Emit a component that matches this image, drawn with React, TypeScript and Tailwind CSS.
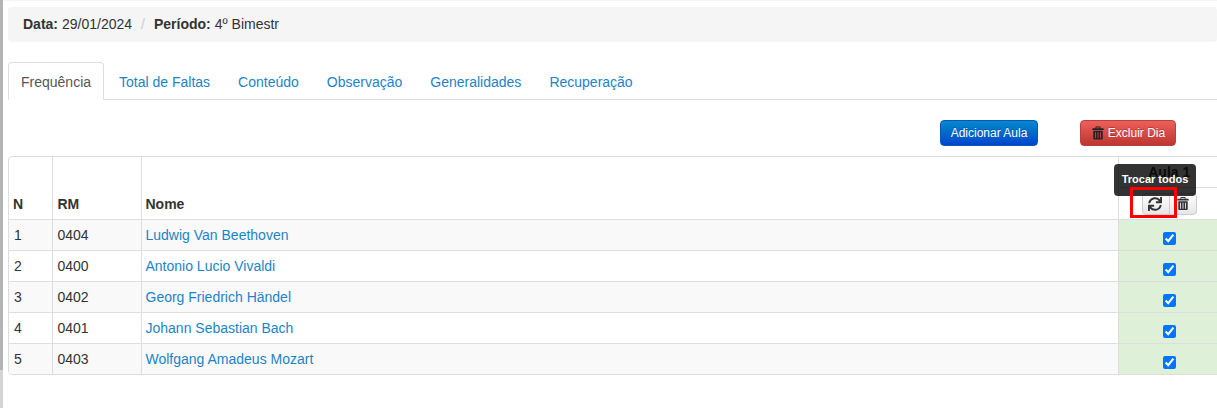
import React from "react";
import { FaSync } from "react-icons/fa";

const font = { fontFamily: '"Liberation Sans", Arial, sans-serif' };

function Trash({ className }: { className?: string }) {
  return (
    <svg viewBox="0 0 14 15" className={className} fill="currentColor">
      <path d="M5 0h4a1 1 0 0 1 1 1v1h3a.6.6 0 0 1 .6.6V4H.4V2.6A.6.6 0 0 1 1 2h3V1a1 1 0 0 1 1-1zm0 1v1h4V1H5z" fillRule="evenodd" />
      <path d="M1.5 5h11v9a1 1 0 0 1-1 1h-9a1 1 0 0 1-1-1V5zm2 1.5v7h1v-7h-1zm3 0v7h1v-7h-1zm3 0v7h1v-7h-1z" fillRule="evenodd" />
    </svg>
  );
}

const tabs = ["Total de Faltas", "Conteúdo", "Observação", "Generalidades", "Recuperação"];
const rows = [
  ["1", "0404", "Ludwig Van Beethoven"],
  ["2", "0400", "Antonio Lucio Vivaldi"],
  ["3", "0402", "Georg Friedrich Händel"],
  ["4", "0401", "Johann Sebastian Bach"],
  ["5", "0403", "Wolfgang Amadeus Mozart"],
];

export default function App() {
  return (
    <div className="flex w-[1217px] h-[408px] overflow-hidden bg-white text-[14px] text-[#333] leading-[20px]" style={font}>
      <div className="flex flex-col w-[3px] shrink-0">
        <div className="h-[370px] bg-[#b4b4b4]" />
        <div className="flex-1 bg-[#d4d4d4]" />
      </div>
      <div className="flex-1 min-w-0 pl-[5px]">
        <div className="h-px -ml-[5px] bg-[#f5f5f5]" />
        <div className="mt-[6px] h-[35px] rounded-[4px] bg-[#f5f5f5] pl-[15px] flex items-center pb-px">
          <b>Data:</b>
          <span className="ml-[4px]">29/01/2024</span>
          <span className="ml-[9px] mr-[9px] text-[#ccc]">/</span>
          <b>Período:</b>
          <span className="ml-[4px]">4º Bimestr</span>
        </div>

        <div className="mt-[20px] flex h-[38px] border-b border-[#ddd]">
          <div className="h-[38px] border border-[#ddd] border-b-white rounded-t-[4px] bg-white px-[12px] pt-[9px] mr-[2px] text-[#555]">
            Frequência
          </div>
          {tabs.map((t) => (
            <div key={t} className="px-[13px] pt-[10px] mr-[2px] text-[#1c84c6]">
              {t}
            </div>
          ))}
        </div>

        <div className="mt-[20px] flex justify-end pr-[41px]">
          <button className="h-[26px] w-[98px] rounded-[4px] border border-[#0b56b8] bg-gradient-to-b from-[#0088cc] to-[#0044cc] text-white text-[12px] leading-none [text-shadow:0_-1px_0_rgba(0,0,0,0.25)]">
            Adicionar Aula
          </button>
          <button className="ml-[42px] h-[26px] w-[96px] rounded-[4px] border border-[#b8423d] bg-gradient-to-b from-[#ee5f5b] to-[#bd362f] text-white text-[12px] leading-none flex items-center justify-center gap-[4px] pl-px [text-shadow:0_-1px_0_rgba(0,0,0,0.25)]">
            <Trash className="w-[12px] h-[14px] text-[#222]" />
            Excluir Dia
          </button>
        </div>

        <div className="relative mt-[10px] w-[1300px] border border-[#ddd] rounded-[4px] overflow-hidden">
          <table className="table-fixed border-collapse w-[1211px]">
            <colgroup>
              <col className="w-[43px]" />
              <col className="w-[89px]" />
              <col className="w-[977px]" />
              <col className="w-[102px]" />
            </colgroup>
            <thead>
              <tr className="h-[30px]">
                <th rowSpan={2} className="align-bottom text-left font-bold pl-[4px] pr-[5px] pb-[5px] border-r border-[#ddd]">N</th>
                <th rowSpan={2} className="align-bottom text-left font-bold px-[5px] pb-[5px] border-r border-[#ddd]">RM</th>
                <th rowSpan={2} className="align-bottom text-left font-bold pl-[4px] pr-[5px] pb-[5px] border-r border-[#ddd]">Nome</th>
                <th className="text-center font-bold border-b border-[#ddd]">Aula 1</th>
              </tr>
              <tr className="h-[32px]">
                <th className="p-0 align-middle">
                  <div className="flex justify-center pt-[1px]">
                    <button className="flex items-center justify-center w-[28px] h-[22px] pr-px rounded-l-[4px] border border-[#ccc] bg-gradient-to-b from-white to-[#e6e6e6] text-[#333]">
                      <FaSync className="w-[14px] h-[14px]" />
                    </button>
                    <button className="flex items-center justify-center w-[28px] h-[22px] -ml-px rounded-r-[4px] border border-[#ccc] bg-gradient-to-b from-white to-[#e6e6e6] text-[#333]">
                      <Trash className="w-[12px] h-[13px]" />
                    </button>
                  </div>
                </th>
              </tr>
            </thead>
            <tbody>
              {rows.map((r, i) => (
                <tr key={r[0]} className={`h-[31px] border-t border-[#ddd] ${i % 2 === 0 ? "bg-[#f9f9f9]" : "bg-white"}`}>
                  <td className="px-[5px] border-r border-[#ddd]">{r[0]}</td>
                  <td className="px-[5px] border-r border-[#ddd]">{r[1]}</td>
                  <td className="pl-[4px] pr-[5px] border-r border-[#ddd] text-[#1c84c6]">{r[2]}</td>
                  <td className="bg-[#dff0d8] text-center p-0">
                    <input type="checkbox" defaultChecked className="w-[13px] h-[13px] align-middle appearance-auto accent-[#0075ff] mt-[5px]" />
                  </td>
                </tr>
              ))}
            </tbody>
          </table>

          <div className="absolute left-[1105px] top-[7px] w-[82px] h-[32px] rounded-[4px] bg-black/80 text-white text-[11px] font-bold leading-[30px] text-center">
            Trocar todos
          </div>
          <div className="absolute left-[1121px] top-[30px] w-[47px] h-[31px] border-[3px] border-[#ff0000]" />
        </div>
      </div>
    </div>
  );
}
